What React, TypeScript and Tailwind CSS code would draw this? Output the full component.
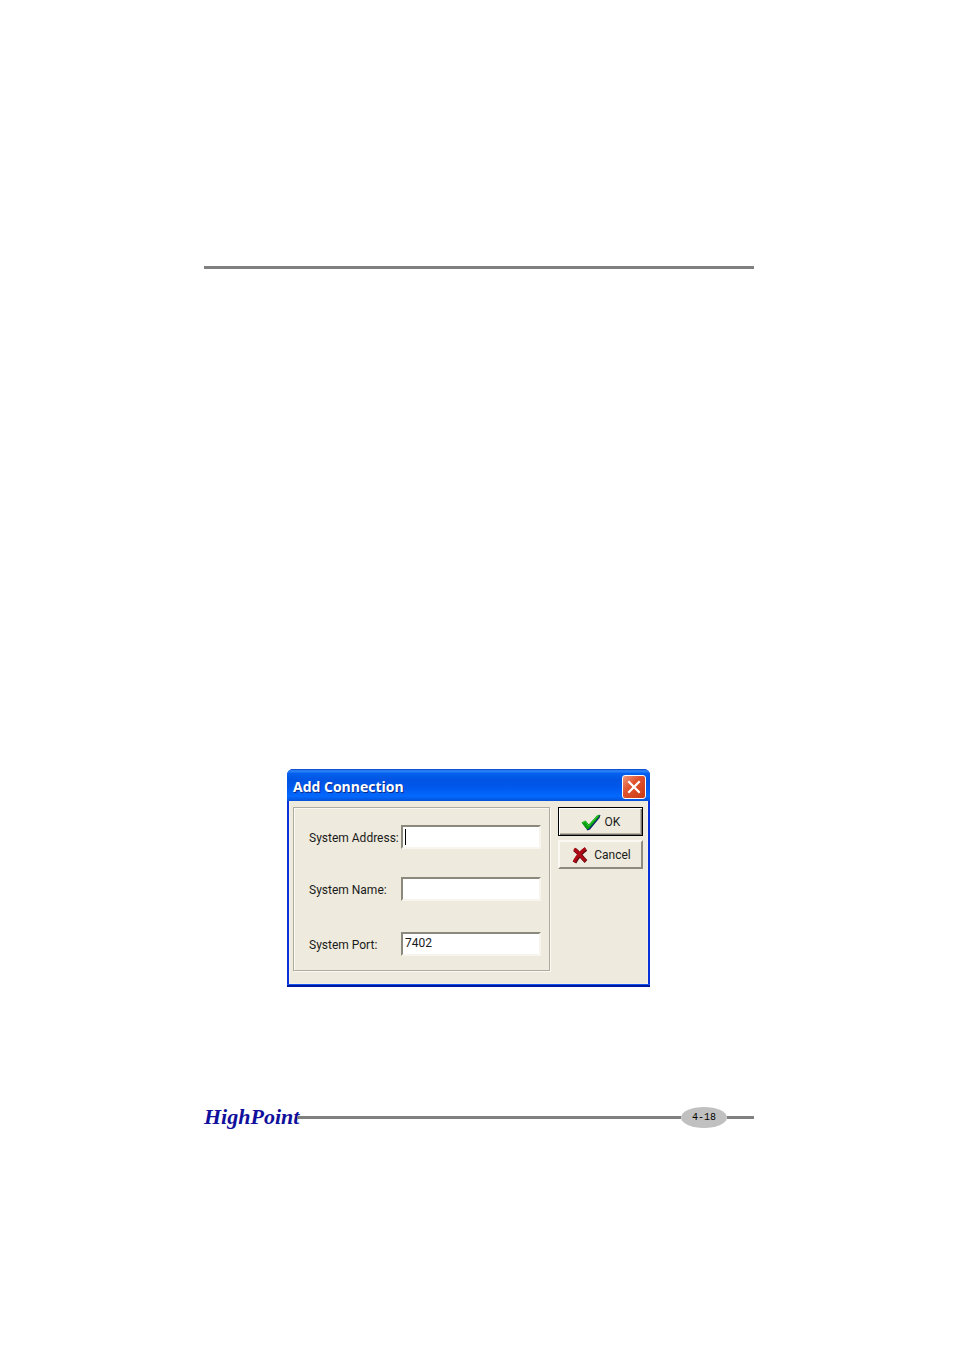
import { useState } from "react";

type FieldProps = {
  id: string;
  label: string;
  value: string;
  onChange: (value: string) => void;
  caret?: boolean;
};

function Field({ id, label, value, onChange, caret }: FieldProps) {
  return (
    <div className="flex items-center">
      <label htmlFor={id} className="w-[92px] shrink-0 pt-0.5 whitespace-nowrap">
        {label}
      </label>
      <div className="relative min-w-0 grow">
        <input
          id={id}
          type="text"
          value={value}
          onChange={(e) => onChange(e.target.value)}
          className="block h-6 w-full border-2 border-t-[#8b897c] border-r-[#f8f5ee] border-b-[#f8f5ee] border-l-[#8b897c] bg-white px-0.5 pb-0.5 outline-none"
        />
        {caret && <span className="absolute top-1 left-1 h-4 w-px bg-black" />}
      </div>
    </div>
  );
}

function CheckIcon() {
  return (
    <svg viewBox="0 0 20 18" className="h-[18px] w-5" aria-hidden="true">
      <path d="M1.500 10.500 5 8.500 8 12 17 2.500 19.500 2 18.500 5 9 16.500 6.500 17.500z" fill="#101c70" />
      <path d="M0.500 9.500 4.500 7.500 7.700 11.500 16 2.500 19 1.500 17.500 4.500 8 15.500 6 16.500z" fill="#08a010" />
      <path d="M2 9.500 4.500 8.500 7.500 13 17 2.800" fill="none" stroke="#35d02c" strokeWidth="1" />
    </svg>
  );
}

function CrossIcon() {
  return (
    <svg viewBox="0 0 16 18" className="h-[18px] w-4" aria-hidden="true">
      <path d="M2.500 3.500C7 6.500 9 11 14 15.500M14 3C9 6.500 6 10 2.500 16.500" fill="none" stroke="#5b0710" strokeWidth="4" />
      <path d="M2 3C6.500 6 8.500 10.500 13.500 15M13.500 2.500C8.500 6 5.500 9.500 2 16" fill="none" stroke="#ae0b14" strokeWidth="3" />
    </svg>
  );
}

function Dialog() {
  const [address, setAddress] = useState("");
  const [name, setName] = useState("");
  const [port, setPort] = useState("7402");

  return (
    <section
      role="dialog"
      aria-labelledby="dialog-title"
      className="w-full max-w-[363px] overflow-hidden rounded-t-md bg-[#0831d9] font-['Roboto','Liberation_Sans',sans-serif] text-[12px] leading-4 text-[#1a1a1a]"
    >
      <header className="flex h-8 items-center justify-between bg-[linear-gradient(to_bottom,#0743c4_0%,#2f88fb_6%,#0560ee_14%,#0054e3_35%,#0059ee_60%,#0369ff_85%,#0452d8_100%)] pt-1 pr-1 pl-1.5">
        <h1
          id="dialog-title"
          className="font-['Open_Sans','Noto_Sans',sans-serif] text-[14px] leading-5 font-bold text-white [text-shadow:1px_1px_0_#0a2a88]"
        >
          Add Connection
        </h1>
        <button
          type="button"
          aria-label="Close"
          className="flex size-6 items-center justify-center rounded-[3px] border border-white bg-[linear-gradient(135deg,#f0987c_0%,#e0532f_40%,#c73a14_100%)]"
        >
          <svg viewBox="0 0 14 14" className="size-4" aria-hidden="true">
            <path d="M2 2 12 12M12 2 2 12" stroke="white" strokeWidth="2" />
          </svg>
        </button>
      </header>
      <form
        onSubmit={(e) => e.preventDefault()}
        className="mx-[2px] flex items-start gap-2 border-x border-b border-[#f4f1e6] bg-[#eeeadd] pt-1.5 pr-1 pb-3 pl-[3px]"
      >
        <div className="flex min-w-0 grow flex-col border border-[#aeaba0] pt-[17px] pr-2 pb-3.5 pl-[15px] shadow-[1px_1px_0_#fbf9f2,inset_1px_1px_0_#fbf9f2]">
          <Field id="address" label="System Address:" value={address} onChange={setAddress} caret />
          <div className="h-7" />
          <Field id="name" label="System Name:" value={name} onChange={setName} />
          <div className="h-[31px]" />
          <Field id="port" label="System Port:" value={port} onChange={setPort} />
        </div>
        <div className="flex w-[85px] shrink-0 flex-col gap-1">
          <button
            type="submit"
            className="flex h-[29px] items-center justify-center gap-1 border border-black bg-[#eeeadd] shadow-[inset_1px_1px_0_#ffffff,inset_-1px_-1px_0_#77756b,inset_-2px_-2px_0_#b5b2a4]"
          >
            <CheckIcon />
            OK
          </button>
          <button
            type="button"
            className="flex h-[29px] items-center justify-center gap-1.5 border-2 border-t-[#faf8f0] border-r-[#8d8a7e] border-b-[#8d8a7e] border-l-[#faf8f0] bg-[#eeeadd] pl-0.5"
          >
            <CrossIcon />
            Cancel
          </button>
        </div>
      </form>
      <div className="h-[3px] border-t border-[#1554e8] bg-[#0018a0]" />
    </section>
  );
}

export default function App() {
  return (
    <main className="min-h-screen bg-white pt-[266px] pr-[200px] pb-52 pl-[204px]">
      <hr className="h-[3px] border-0 bg-[#808080]" />
      <div className="pt-[500px] pl-[83px]">
        <Dialog />
      </div>
      <footer className="mt-[114px] flex h-8 items-center">
        <span className="w-[93px] font-['Liberation_Serif',serif] text-[22px] leading-8 font-bold whitespace-nowrap text-[#10109c] italic">
          HighPoint
        </span>
        <span className="h-[3px] grow bg-[#808080]" />
        <span className="flex h-[21px] w-[46px] items-center justify-center rounded-[50%] bg-[#c0c0c0] pt-0.5 font-['Liberation_Mono',monospace] text-[10px] leading-4 text-black">
          4-18
        </span>
        <span className="h-[3px] w-[27px] bg-[#808080]" />
      </footer>
    </main>
  );
}
